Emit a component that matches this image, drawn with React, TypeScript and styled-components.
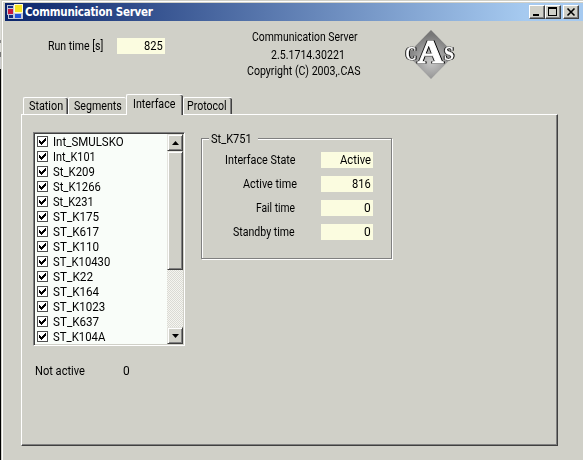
import React, { useLayoutEffect, useRef, useState } from 'react';
import styled, { createGlobalStyle } from 'styled-components';

const Global = createGlobalStyle`
  * { box-sizing: border-box; }
  body { margin: 0; background: #d0d0c8; overflow: hidden; }
`;

const Desktop = styled.div`
  width: 583px; height: 460px; display: flex; overflow: hidden;
  font: 12.5px/15px Roboto, "Liberation Sans", sans-serif;
  color: #000; white-space: nowrap;
`;
const Backdrop = styled.div`
  width: 1px; flex: none;
  background: linear-gradient(#dcdcd8 0 40px, #888 40px 43px, #dcdcd8 43px 52px, #777 52px 57px, #ccc 57px 69px, #000 69px);
`;
const Window = styled.div`
  flex: 1; min-width: 0; background: #d0d0c8; padding: 1px 0 0 2px;
  border-left: 1px solid #d0d0c8; border-top: 1px solid #d0d0c8;
  box-shadow: inset 1px 1px 0 #fff;
`;
const TitleBar = styled.div`
  margin: 1px 0 0 1px; height: 18px; display: flex; align-items: center;
  background: linear-gradient(90deg, #0a246a, #a6caf0 520px);
  padding: 0 4px 0 2px;
`;
const Title = styled.h1`
  margin: 0 0 0 2px; flex: 1; color: #fff;
  font: bold 11.5px/17px "DejaVu Sans Condensed", "DejaVu Sans", sans-serif;
  letter-spacing: -0.25px;
`;
const CaptionButton = styled.button<{ $gap?: boolean }>`
  width: 16px; height: 14px; padding: 0; display: block;
  margin-left: ${p => (p.$gap ? 2 : 0)}px;
  background: #d0d0c8; border: 1px solid; border-color: #fff #404040 #404040 #fff;
  box-shadow: inset -1px -1px 0 #808080;
  svg { display: block; }
`;
const FitBox = styled.span<{ $w: number }>`
  display: inline-block; flex: none; width: ${p => p.$w}px; text-align: left; vertical-align: top;
`;
const FitInner = styled.span` display: inline-block; transform-origin: 0 0; `;

/* Condenses a caption horizontally so that it fills the given width. */
function Fit({ w, children }: { w: number; children: string }) {
  const ref = useRef<HTMLSpanElement>(null);
  const [scale, setScale] = useState(1);
  useLayoutEffect(() => {
    const natural = ref.current?.offsetWidth;
    if (natural) setScale(Math.min(1, (w + 0.7) / natural));
  }, [w, children]);
  return (
    <FitBox $w={w}>
      <FitInner ref={ref} style={{ transform: `scaleX(${scale})` }}>{children}</FitInner>
    </FitBox>
  );
}

const Header = styled.header`
  height: 73px; display: flex; align-items: flex-start;
`;
const RunTime = styled.div`
  display: flex; gap: 14px; padding: 17px 0 0 44px; width: 242px;
`;
const Field = styled.output<{ $w: number }>`
  display: block; width: ${p => p.$w}px; height: 16px; background: #fbfce0;
  text-align: right; padding-right: 3px; line-height: 16px;
`;
const About = styled.div`
  width: 114px; padding-top: 8px; display: flex; flex-direction: column; align-items: center;
`;
const AboutLine = styled.span<{ $h: number; $dx?: number }>`
  height: ${p => p.$h}px; padding-left: ${p => p.$dx ?? 0}px;
`;
const Logo = styled.svg` margin: 8px 0 0 43px; display: block; `;
const LogoLetters = styled.g`
  filter: drop-shadow(1px 0.5px 0 #000) drop-shadow(-0.7px 0.4px 0 #222);
`;

const Tabs = styled.div`
  display: flex; align-items: flex-end; height: 20px; margin-left: 19px;
`;
const Tab = styled.div<{ $w: number; $on?: boolean; $joined?: boolean; $pad?: number }>`
  width: ${p => p.$w}px; height: ${p => (p.$on ? 21 : 17)}px;
  margin-bottom: ${p => (p.$on ? -1 : 0)}px;
  padding: ${p => (p.$on ? 1 : 0)}px 0 0 ${p => p.$pad ?? 5}px;
  background: #d0d0c8; border: solid #fff; border-width: 1px 0 0 1px;
  border-top-left-radius: 2px; border-top-right-radius: 2px;
  box-shadow: ${p => (p.$joined ? 'none' : 'inset -1px 0 0 #404040, inset -2px 0 0 #808080')};
  z-index: ${p => (p.$on ? 1 : 0)};
`;
const Panel = styled.main`
  width: 537px; height: 332px; margin-left: 17px; padding: 17px 0 0 11px;
  border: 1px solid; border-color: #fff #404040 #404040 #fff;
  box-shadow: inset -1px -1px 0 #808080;
`;
const Columns = styled.div` display: flex; `;
const List = styled.div`
  width: 152px; height: 214px; display: flex; background: #f9fdf9;
  border: 1px solid; border-color: #808080 #fff #fff #808080;
  box-shadow: inset 1px 1px 0 #404040, inset -1px -1px 0 #d0d0c8;
  padding: 1px;
`;
const Items = styled.div` flex: 1; padding: 0 0 0 2px; overflow: hidden; `;
const Item = styled.label`
  height: 15px; display: flex; align-items: flex-start;
  svg { margin: 2px 5px 0 0; flex: none; }
`;
const Scroll = styled.div`
  width: 16px; display: flex; flex-direction: column;
  background: conic-gradient(#dadad4 25%, #f5f5f0 0 50%, #dadad4 0 75%, #f5f5f0 0) 0 0 / 2px 2px;
`;
const ScrollPart = styled.div<{ $h: number; $end?: boolean }>`
  height: ${p => p.$h}px; margin-top: ${p => (p.$end ? 'auto' : '0')};
  background: #d0d0c8; border: 1px solid; border-color: #e4e4de #404040 #404040 #e4e4de;
  box-shadow: inset 1px 1px 0 #fff, inset -1px -1px 0 #808080;
  display: flex; align-items: center; justify-content: center;
`;
const GroupBox = styled.section`
  width: 191px; height: 121px; margin: 6px 0 0 16px; padding: 0 18px 0 0;
  border: 1px solid #808080;
  box-shadow: 1px 1px 0 #fff, inset 1px 1px 0 #fff;
`;
const Legend = styled.h2`
  margin: -8px 0 6px 7px; padding: 0 7px 0 2px; width: 49px; height: 15px;
  font: inherit; background: #d0d0c8;
`;
const Row = styled.div<{ $gap: number }>`
  height: 16px; margin-bottom: 8px; display: flex; justify-content: flex-end;
  gap: ${p => p.$gap}px; line-height: 16px;
`;
const Footer = styled.div` display: flex; gap: 39px; padding: 17px 0 0 2px; `;

const Check = () => (
  <svg width="11" height="11" shapeRendering="crispEdges">
    <rect x=".5" y=".5" width="10" height="10" fill="#fff" stroke="#505050" />
    <path d="M2 4h1v1h1v1h1v-1h1v-1h1v-1h1v-1h1v3h-1v1h-1v1h-1v1h-1v1h-1v-1h-1v-1h-1z" fill="#000" />
  </svg>
);
const AppIcon = () => (
  <svg width="16" height="16" shapeRendering="crispEdges">
    <path d="M0 1h7v4h-7zM0 5h7v6h-7zM1 10h6v5h-6zM7 9h9v6h-9z" fill="#c3c8da" />
    <path d="M1 2h5v2h-5z" fill="#123086" />
    <path d="M1 5h5v5h-5z" fill="#c8183c" />
    <path d="M2 11h4v3h-4z" fill="#152c80" />
    <path d="M7 0h9v9h-9z" fill="#fffbd0" />
    <path d="M8 1h7v7h-7z" fill="#f5e322" />
    <path d="M8 10h6v4h-6z" fill="#2454dc" />
  </svg>
);

const items: [string, number][] = [
  ['Int_SMULSKO', 70], ['Int_K101', 42], ['St_K209', 41], ['St_K1266', 47], ['St_K231', 40],
  ['ST_K175', 45], ['ST_K617', 45], ['ST_K110', 45], ['ST_K10430', 57], ['ST_K22', 39],
  ['ST_K164', 45], ['ST_K1023', 51], ['ST_K637', 45], ['ST_K104A', 52],
];
const stats: { label: string; w: number; value: string; vw: number; gap: number }[] = [
  { label: 'Interface State', w: 70, value: 'Active', vw: 30, gap: 26 },
  { label: 'Active time', w: 53, value: '816', vw: 18, gap: 25 },
  { label: 'Fail time', w: 38, value: '0', vw: 6, gap: 27 },
  { label: 'Standby time', w: 61, value: '0', vw: 6, gap: 27 },
];

export default function App() {
  return (
    <Desktop>
      <Global />
      <Backdrop />
      <Window>
        <TitleBar>
          <AppIcon />
          <Title>Communication Server</Title>
          <CaptionButton aria-label="Minimize"><svg width="14" height="12"><path d="M3 8h6v2h-6z" /></svg></CaptionButton>
          <CaptionButton aria-label="Maximize"><svg width="14" height="12"><path fillRule="evenodd" d="M2 1h9v9h-9zM3 3v6h7v-6z" /></svg></CaptionButton>
          <CaptionButton $gap aria-label="Close"><svg width="14" height="12"><path d="M3.5 2.5l7 7M10.5 2.5l-7 7" stroke="#000" strokeWidth="1.6" /></svg></CaptionButton>
        </TitleBar>
        <Header>
          <RunTime><Fit w={55}>Run time [s]</Fit><Field $w={48}><Fit w={18}>825</Fit></Field></RunTime>
          <About>
            <AboutLine $h={18} $dx={2}><Fit w={105}>Communication Server</Fit></AboutLine>
            <AboutLine $h={16} $dx={8}><Fit w={73}>2.5.1714.30221</Fit></AboutLine>
            <AboutLine $h={16}><Fit w={113}>Copyright (C) 2003,.CAS</Fit></AboutLine>
          </About>
          <Logo width="54" height="52">
            <defs>
              <radialGradient id="metal" cx=".5" cy=".65" r=".55">
                <stop stopColor="#c8c8c8" /><stop offset="1" stopColor="#777" />
              </radialGradient>
            </defs>
            <path d="M28 1L52 25.500L28 50L4 25.500z" fill="url(#metal)" />
            <LogoLetters fontFamily="Liberation Serif, serif" fontWeight="bold" fill="#fff" stroke="#fff">
              <text x="2.500" y="31" fontSize="18" strokeWidth=".3" textLength="11" lengthAdjust="spacingAndGlyphs">C</text>
              <text x="14.500" y="33.500" fontSize="33" strokeWidth=".9" textLength="26" lengthAdjust="spacingAndGlyphs">A</text>
              <text x="41" y="31" fontSize="18" strokeWidth=".3" textLength="10" lengthAdjust="spacingAndGlyphs">S</text>
            </LogoLetters>
          </Logo>
        </Header>
        <Tabs>
          <Tab $w={45}><Fit w={33}>Station</Fit></Tab>
          <Tab $w={58} $joined><Fit w={47}>Segments</Fit></Tab>
          <Tab $w={57} $on $pad={6}><Fit w={42}>Interface</Fit></Tab>
          <Tab $w={49} $pad={3}><Fit w={39}>Protocol</Fit></Tab>
        </Tabs>
        <Panel>
          <Columns>
            <List>
              <Items>{items.map(([name, w]) => <Item key={name}><Check /><Fit w={w}>{name}</Fit></Item>)}</Items>
              <Scroll>
                <ScrollPart $h={17}><svg width="7" height="4"><path d="M0 4L3.500 0L7 4z" /></svg></ScrollPart>
                <ScrollPart $h={119} />
                <ScrollPart $h={17} $end><svg width="7" height="4"><path d="M0 0L3.500 4L7 0z" /></svg></ScrollPart>
              </Scroll>
            </List>
            <GroupBox>
              <Legend><Fit w={40}>St_K751</Fit></Legend>
              {stats.map(s => (
                <Row key={s.label} $gap={s.gap}>
                  <Fit w={s.w}>{s.label}</Fit>
                  <Field $w={52}><Fit w={s.vw}>{s.value}</Fit></Field>
                </Row>
              ))}
            </GroupBox>
          </Columns>
          <Footer><Fit w={49}>Not active</Fit><Fit w={6}>0</Fit></Footer>
        </Panel>
      </Window>
    </Desktop>
  );
}
